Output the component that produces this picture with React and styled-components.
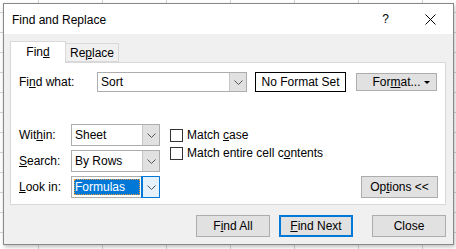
import React from 'react';
import styled, { createGlobalStyle } from 'styled-components';

const GlobalStyle = createGlobalStyle`
  html, body {
    margin: 0;
    padding: 0;
    background: #ffffff;
  }
  body {
    font-family: 'Segoe UI', 'Liberation Sans', Arial, sans-serif;
    font-size: 12px;
    color: #000;
  }
`;

const Sheet = styled.div`
  width: 456px;
  height: 249px;
  box-sizing: border-box;
  padding: 3px 0 0 3px;
  background-color: #ffffff;
  background-image:
    linear-gradient(to right, #d4d4d4 1px, transparent 1px),
    linear-gradient(to bottom, #d4d4d4 1px, transparent 1px);
  background-size: 64px 20px;
  background-position: 38px 12px;
  overflow: hidden;
`;

const Dialog = styled.div`
  width: 451px;
  height: 242px;
  box-sizing: border-box;
  border: 1px solid #888888;
  background: #f0f0f0;
  display: flex;
  flex-direction: column;
  box-shadow: 1px 2px 4px rgba(0, 0, 0, 0.25);
`;

const TitleBar = styled.div`
  height: 30px;
  flex: none;
  background: #ffffff;
  display: flex;
  align-items: center;
  padding-left: 8px;
`;

const Title = styled.div`
  flex: 1;
  font-size: 12px;
  padding-top: 1px;
`;

const TitleButton = styled.div`
  width: 45px;
  height: 30px;
  display: flex;
  align-items: center;
  justify-content: center;
  font-size: 12px;
`;

const Body = styled.div`
  flex: 1;
  display: flex;
  flex-direction: column;
  padding: 7px 7px 0 6px;
`;

const Tabs = styled.div`
  display: flex;
  align-items: flex-end;
  height: 21px;
  position: relative;
  z-index: 1;
`;

const Tab = styled.div`
  box-sizing: border-box;
  width: ${p => p.$w}px;
  height: ${p => (p.$active ? 22 : 19)}px;
  margin-bottom: ${p => (p.$active ? -1 : 0)}px;
  border: 1px solid #d9d9d9;
  border-bottom: ${p => (p.$active ? 'none' : '1px solid #d9d9d9')};
  border-left: ${p => (p.$active ? '1px solid #d9d9d9' : 'none')};
  background: ${p => (p.$active ? '#ffffff' : '#f0f0f0')};
  display: flex;
  justify-content: center;
  padding-top: ${p => (p.$active ? 3 : 2)}px;
`;

const Panel = styled.div`
  height: 143px;
  box-sizing: border-box;
  border: 1px solid #d9d9d9;
  background: #ffffff;
  padding: 9px 7px 6px 8px;
  display: flex;
  flex-direction: column;
`;

const FindRow = styled.div`
  display: flex;
  align-items: center;
  height: 20px;
`;

const Label = styled.div`
  width: ${p => p.$w}px;
  flex: none;
`;

const Combo = styled.div`
  box-sizing: border-box;
  width: ${p => p.$w}px;
  height: ${p => p.$h}px;
  border: 1px solid #adadad;
  background: #fff;
  display: flex;
  align-items: stretch;
`;

const ComboText = styled.div`
  flex: 1;
  display: flex;
  align-items: center;
  padding-left: 3px;
`;

const Selected = styled.div`
  flex: 1;
  margin: 2px;
  display: flex;
  align-items: center;
  padding-left: 1px;
  background: #0078d7;
  color: #fff;
  outline: 1px dotted #e89a3c;
  outline-offset: -1px;
`;

const DropButton = styled.div`
  width: 17px;
  flex: none;
  box-sizing: border-box;
  border-left: 1px solid ${p => (p.$focus ? '#0078d7' : '#c6c6c6')};
  background: ${p => (p.$focus ? '#e5f1fb' : '#e1e1e1')};
  outline: ${p => (p.$focus ? '1px solid #0078d7' : 'none')};
  display: flex;
  align-items: center;
  justify-content: center;
`;

const FormatBox = styled.div`
  box-sizing: border-box;
  width: 91px;
  height: 20px;
  margin-left: 8px;
  border: 1px solid #000;
  display: flex;
  align-items: center;
  justify-content: center;
`;

const Button = styled.div`
  box-sizing: border-box;
  width: ${p => p.$w}px;
  height: ${p => p.$h || 22}px;
  margin-left: ${p => p.$ml || 0}px;
  border: ${p => (p.$default ? '2px solid #0078d7' : '1px solid #adadad')};
  background: #e1e1e1;
  display: flex;
  align-items: center;
  justify-content: center;
  position: relative;
`;

const Caret = styled.span`
  position: absolute;
  right: 6px;
  top: 7px;
  width: 0;
  height: 0;
  border-left: 3px solid transparent;
  border-right: 3px solid transparent;
  border-top: 3px solid #000;
`;

const Options = styled.div`
  margin-top: 32px;
  display: flex;
  align-items: flex-end;
`;

const LeftGrid = styled.div`
  display: grid;
  grid-template-columns: 52px 89px;
  grid-auto-rows: 22px;
  row-gap: 4px;
  align-items: center;
`;

const Checks = styled.div`
  display: flex;
  flex-direction: column;
  margin-left: 10px;
  align-self: flex-start;
  padding-top: 2px;
`;

const CheckRow = styled.div`
  display: flex;
  align-items: center;
  height: 18px;
`;

const Box = styled.span`
  box-sizing: border-box;
  width: 13px;
  height: 13px;
  border: 1px solid #333;
  background: #fff;
  margin-right: 4px;
`;

const Spacer = styled.div`
  flex: 1;
`;

const Footer = styled.div`
  display: flex;
  justify-content: flex-end;
  margin-top: 10px;
`;

const Chevron = () => (
  <svg width="9" height="5" viewBox="0 0 9 5">
    <polyline points="0.5,0.5 4.5,4.5 8.5,0.5" fill="none" stroke="#555" strokeWidth="1" />
  </svg>
);

const Dropdown = ({ w, h, children, focus }) => (
  <Combo $w={w} $h={h}>
    {focus ? <Selected>{children}</Selected> : <ComboText>{children}</ComboText>}
    <DropButton $focus={focus}><Chevron /></DropButton>
  </Combo>
);

const App = () => {
  return (
    <Sheet>
      <GlobalStyle />
      <Dialog>
        <TitleBar>
          <Title>Find and Replace</Title>
          <TitleButton>?</TitleButton>
          <TitleButton>
            <svg width="11" height="11" viewBox="0 0 11 11">
              <path d="M0.5 0.5 L10.5 10.5 M10.5 0.5 L0.5 10.5" stroke="#000" strokeWidth="1" />
            </svg>
          </TitleButton>
        </TitleBar>
        <Body>
          <Tabs>
            <Tab $w={56} $active><span>Fin<u>d</u></span></Tab>
            <Tab $w={53}><span>Re<u>p</u>lace</span></Tab>
          </Tabs>
          <Panel>
            <FindRow>
              <Label $w={78}>Fi<u>n</u>d what:</Label>
              <Dropdown w={150} h={20}>Sort</Dropdown>
              <FormatBox>No Format Set</FormatBox>
              <Button $w={81} $h={18} $ml={10}><span>For<u>m</u>at...</span><Caret /></Button>
            </FindRow>
            <Options>
              <LeftGrid>
                <Label>Wit<u>h</u>in:</Label>
                <Dropdown w={89} h={22}>Sheet</Dropdown>
                <Label><u>S</u>earch:</Label>
                <Dropdown w={89} h={22}>By Rows</Dropdown>
                <Label><u>L</u>ook in:</Label>
                <Dropdown w={89} h={22} focus>Formulas</Dropdown>
              </LeftGrid>
              <Checks>
                <CheckRow><Box /><span>Match <u>c</u>ase</span></CheckRow>
                <CheckRow><Box /><span>Match entire cell c<u>o</u>ntents</span></CheckRow>
              </Checks>
              <Spacer />
              <Button $w={77}><span>Op<u>t</u>ions &lt;&lt;</span></Button>
            </Options>
          </Panel>
          <Footer>
            <Button $w={74}><span>F<u>i</u>nd All</span></Button>
            <Button $w={74} $ml={9} $default><span><u>F</u>ind Next</span></Button>
            <Button $w={74} $ml={19}>Close</Button>
          </Footer>
        </Body>
      </Dialog>
    </Sheet>
  );
};

export default App;
